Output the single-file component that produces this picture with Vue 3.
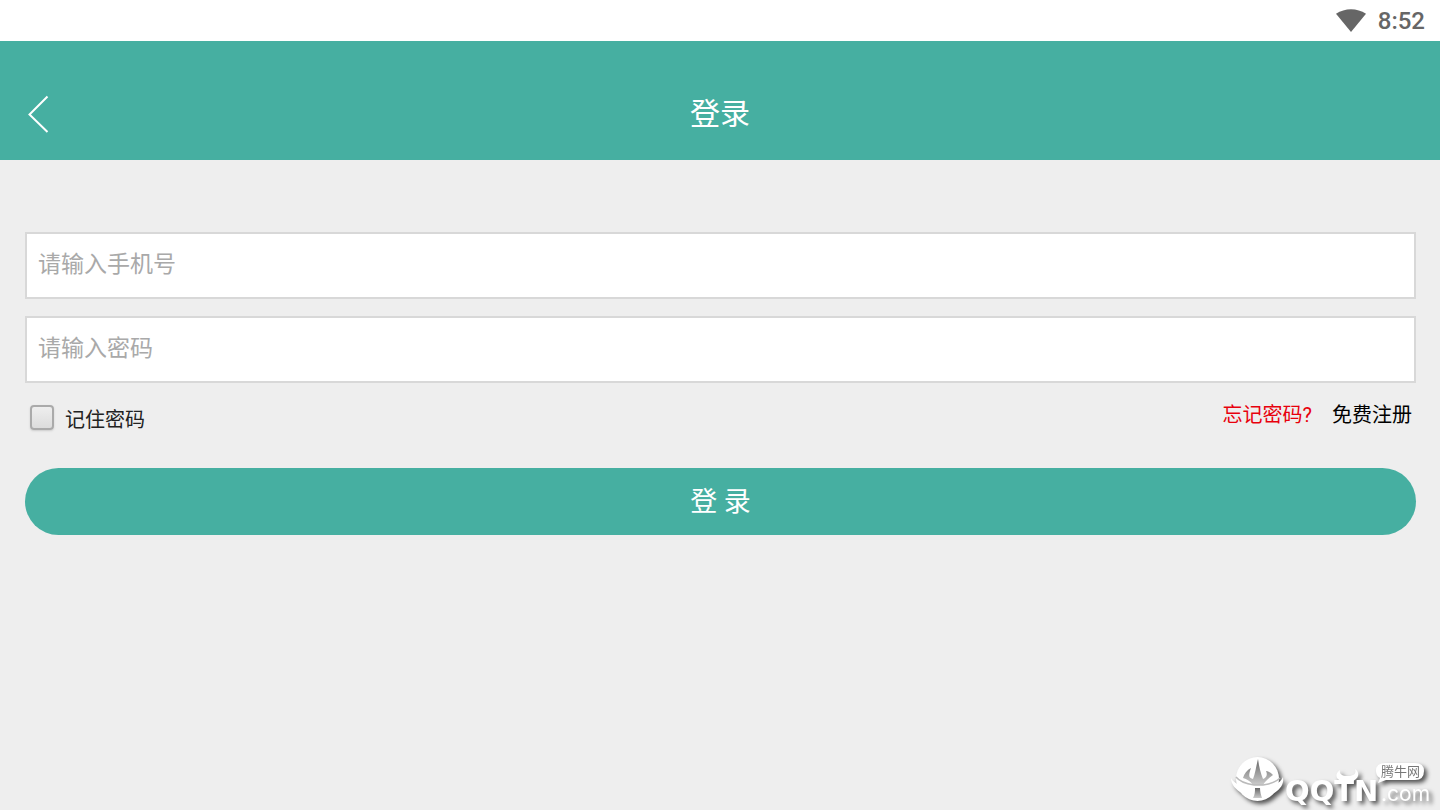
<template>
  <div class="app">
    <div class="status-bar">
      <svg class="status-bar__wifi" viewBox="0 0 30 23" aria-hidden="true">
        <path d="M0 4.8C9-1.4 21-1.4 30 4.8L15 23Z" fill="#666" />
      </svg>
      <span class="status-bar__time">8:52</span>
    </div>

    <header class="header">
      <button class="header__back" type="button" aria-label="返回">
        <svg viewBox="0 0 24 40" aria-hidden="true">
          <path d="M22.5 2.5 4.5 20.5 22.5 38" fill="none" stroke="#fff" stroke-width="2" />
        </svg>
      </button>
      <h1 class="header__title">登录</h1>
    </header>

    <form class="login" @submit.prevent>
      <input v-model="phone" class="login__input" type="tel" placeholder="请输入手机号" aria-label="请输入手机号" />
      <input v-model="password" class="login__input" type="password" placeholder="请输入密码" aria-label="请输入密码" />

      <div class="login__options">
        <div class="remember">
          <input id="remember" v-model="remember" class="remember__box" type="checkbox" />
          <label for="remember">记住密码</label>
        </div>
        <nav class="login__links">
          <a class="login__forgot" href="#">忘记密码?</a>
          <a href="#">免费注册</a>
        </nav>
      </div>

      <button class="login__submit" type="submit">登 录</button>
    </form>

    <div class="watermark">
      <svg class="watermark__art" viewBox="0 0 220 65" aria-hidden="true">
        <defs>
          <linearGradient id="blade" x1="0" y1="0" x2="0" y2="1">
            <stop offset="0" stop-color="#666" />
            <stop offset="1" stop-color="#ccc" />
          </linearGradient>
        </defs>
        <!-- globe with its ring -->
        <ellipse cx="37.5" cy="34" rx="21.5" ry="22" fill="#fff" />
        <path d="M11 33C11 38 14 43 20 47C31 54 47 54 57 46C62 42 64 37 63 32C60 39 51 43 40 43H34C24 43 14 39 11 33Z" fill="#fff" />
        <path d="M38 14C36 22 35 29 33 34C29 33 28 31 31 23C27 25 24 29 23 33C27 34 30 36 33 40H43C45 36 49 33 53 30C50 27 48 26 46 26C48 30 46 33 43 34C41 29 39 22 38 14Z" fill="url(#blade)" />
        <path d="M16 32C20 37 27 39 34 40H43C50 39 56 37 60 33" fill="none" stroke="#bbb" stroke-width="1.5" />
        <path d="M35 43H40C40 47 41 50 42 53H33C35 50 35 46 35 43Z" fill="url(#blade)" />
        <!-- horns above the T -->
        <path d="M120 25C113 30 117 37 127 37C137 37 142 29 135 24C137 29 133 31 128 31C122 31 119 29 120 25Z" fill="#fff" />
        <!-- speech bubble -->
        <path d="M165 18H195Q204 18 204 26Q204 35 195 35H166L158 38L160 33Q156 31 156 26Q156 18 165 18Z" fill="#fff" />
        <text x="161" y="31" class="watermark__tag">腾牛网</text>
        <text x="65" y="56" class="watermark__name">QQTN</text>
        <text x="161" y="56" class="watermark__tld">.com</text>
      </svg>
    </div>
  </div>
</template>

<script setup>
import { ref } from 'vue';

const phone = ref('');
const password = ref('');
const remember = ref(false);
</script>

<style>
body {
  background: #eee;
}
</style>

<style scoped>
.app {
  min-height: 100vh;
  background: #eee;
  font-family: Roboto, "Noto Sans CJK SC", sans-serif;
}

.status-bar {
  display: flex;
  align-items: center;
  justify-content: flex-end;
  gap: 12px;
  height: 41px;
  padding: 0 15px;
  background: #fff;
  color: #666;
}

.status-bar__wifi {
  width: 30px;
  height: 23px;
}

.status-bar__time {
  font-size: 24px;
  font-weight: 500;
  line-height: 42px;
}

.header {
  display: grid;
  grid-template-columns: 1fr auto 1fr;
  align-items: center;
  padding: 48px 24px 21px;
  background: #46afa1;
  color: #fff;
}

.header__back {
  justify-self: start;
  width: 26px;
  height: 40px;
  padding: 0;
  border: 0;
  background: none;
}

.header__back svg {
  display: block;
  width: 26px;
  height: 40px;
}

.header__title {
  margin: 0;
  font-size: 30px;
  font-weight: 400;
  line-height: 50px;
}

.login {
  display: flex;
  flex-direction: column;
  gap: 17px;
  padding: 72px 24px 24px 25px;
}

.login__input {
  box-sizing: border-box;
  width: 100%;
  height: 67px;
  padding: 0 11px 3px;
  border: 2px solid #d8d8d8;
  border-radius: 0;
  outline: none;
  background: #fff;
  color: #333;
  font-family: inherit;
  font-size: 23px;
}

.login__input::placeholder {
  color: #a9a9a9;
}

.login__options {
  display: flex;
  justify-content: space-between;
  height: 51px;
  padding: 0 4px 0 5px;
  font-size: 20px;
  line-height: 30px;
}

.remember {
  display: flex;
  align-items: flex-start;
  gap: 11px;
  padding-top: 5px;
  color: #222;
}

.remember__box {
  appearance: none;
  box-sizing: border-box;
  width: 24px;
  height: 25px;
  margin: 0;
  border: 2px solid #aaa;
  border-radius: 4px;
  background: linear-gradient(#eee, #dcdcdc);
  box-shadow: 0 1px 2px #ccc;
}

.remember__box:checked {
  background: #46afa1;
}

.login__links {
  display: flex;
  gap: 20px;
}

.login__links a {
  color: #000;
  text-decoration: none;
}

.login__links .login__forgot {
  color: #e8000c;
}

.login__submit {
  height: 67px;
  padding: 0 0 5px;
  border: 0;
  border-radius: 34px;
  background: #46afa1;
  color: #fff;
  font-family: inherit;
  font-size: 27px;
}

.watermark {
  position: fixed;
  right: 0;
  bottom: 0;
  pointer-events: none;
}

.watermark__art {
  display: block;
  width: 220px;
  height: 65px;
  filter: drop-shadow(3px 3px 2px #555);
}

.watermark__tag {
  fill: #777;
  font-family: "Noto Sans CJK SC", sans-serif;
  font-size: 13px;
}

.watermark__name {
  fill: #fff;
  font-family: "DejaVu Sans", sans-serif;
  font-size: 29px;
  font-weight: 700;
}

.watermark__tld {
  fill: #fff;
  font-family: Inter, sans-serif;
  font-size: 21px;
}
</style>
